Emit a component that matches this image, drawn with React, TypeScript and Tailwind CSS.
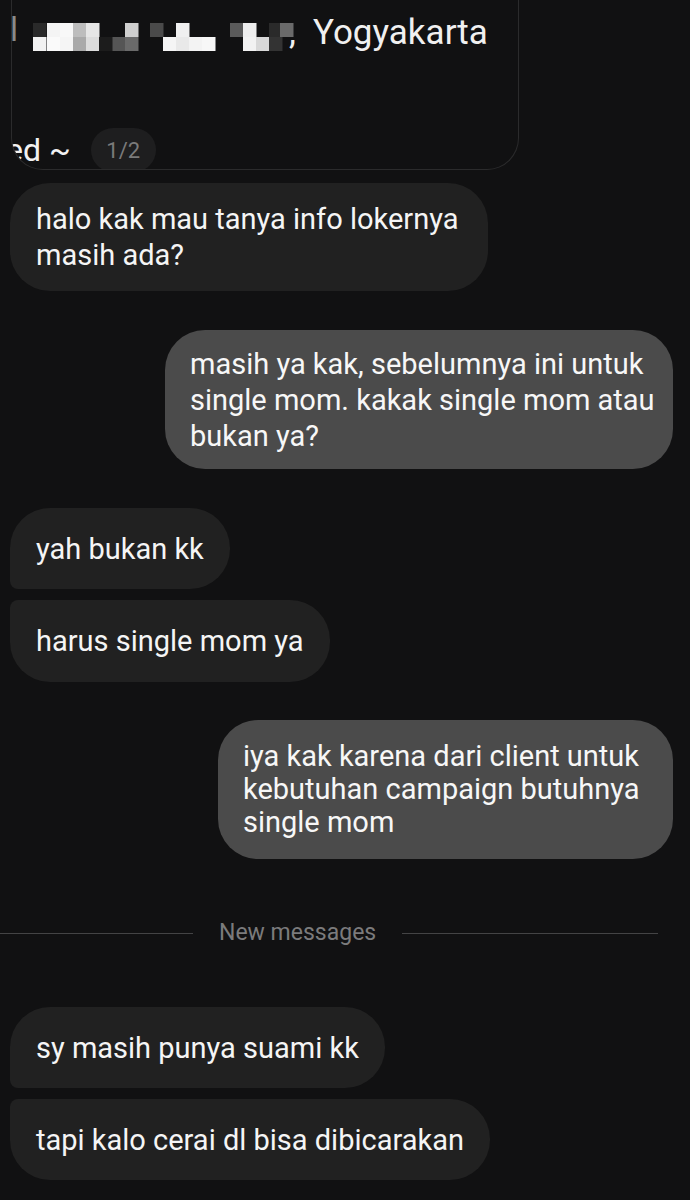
import React from 'react'

const font = { fontFamily: 'Roboto, "Liberation Sans", sans-serif' }

function Mosaic() {
  // pixelated censor blocks over the address
  const blocks: [number, number, string][] = [
    [47, 23, '#f4f4f4'], [60, 23, '#f8f8f8'], [73, 23, '#bdbdbd'], [86, 23, '#e6e6e6'], [33, 23, '#2a2a2a'],
    [33, 37, '#f2f2f2'], [47, 37, '#fafafa'], [60, 37, '#f5f5f5'], [73, 37, '#a9a9a9'], [86, 37, '#dcdcdc'],
    [125, 23, '#cfcfcf'], [112, 37, '#555'], [125, 37, '#6a6a6a'], [99, 37, '#1c1c1c'],
    [150, 23, '#4a4a4a'], [176, 23, '#f0f0f0'], [163, 37, '#f5f5f5'], [176, 37, '#e9e9e9'], [189, 37, '#f3f3f3'], [202, 37, '#f7f7f7'],
    [230, 23, '#5a5a5a'], [243, 23, '#eeeeee'], [243, 37, '#f2f2f2'], [256, 37, '#d8d8d8'], [269, 23, '#2a2a2a'], [280, 23, '#6a6a6a'], [269, 37, '#333'],
  ]
  return (
    <svg width="300" height="60" viewBox="0 0 300 60" className="absolute left-0 top-0">
      {blocks.map(([x, y, c], i) => (
        <rect key={i} x={x} y={y} width="13.5" height="14" fill={c} />
      ))}
    </svg>
  )
}

function Received({ children, h, w, tl = 40, bl = 40 }: { children: React.ReactNode; h: string; w?: string; tl?: number; bl?: number }) {
  const corners =
    tl === 40 && bl === 40
      ? 'rounded-[40px]'
      : tl === 40
        ? 'rounded-tl-[40px] rounded-tr-[40px] rounded-br-[40px] rounded-bl-[8px]'
        : 'rounded-tl-[8px] rounded-tr-[40px] rounded-br-[40px] rounded-bl-[40px]'
  return (
    <div className={`self-start flex items-center bg-[#212121] text-[#f5f5f5] px-[26px] text-[29px] leading-[36px] whitespace-nowrap ${h} ${w ?? ''} ${corners}`}>
      <p>{children}</p>
    </div>
  )
}

function Sent({ children, h, w }: { children: React.ReactNode; h: string; w: string }) {
  return (
    <div className={`self-end mr-[7px] flex items-center bg-[#4b4b4b] text-[#f7f7f7] px-[25px] text-[29px] leading-[36px] whitespace-nowrap rounded-[40px] ${h} ${w}`}>
      <p>{children}</p>
    </div>
  )
}

export default function App() {
  return (
    <div className="w-[690px] h-[1200px] bg-[#111112] overflow-hidden flex flex-col" style={font}>
      {/* shared post card, scrolled so only its lower part shows */}
      <div className="relative ml-[11px] w-[508px] h-[170px] shrink-0 overflow-hidden border border-t-0 border-[#2b2b2c] rounded-b-[32px]">
        <div className="absolute left-[-12px] top-0 w-[520px] h-[60px]">
          <Mosaic />
          <span className="absolute left-[10px] top-[8px] text-[33px] leading-[44px] text-[#8a8a8a]">l</span>
          <span className="absolute left-[289px] top-[11px] text-[35px] leading-[44px] text-[#f0f0f0]">,</span>
          <span className="absolute left-[313px] top-[11px] text-[35px] leading-[44px] text-[#f0f0f0]">Yogyakarta</span>
        </div>
        <div className="absolute left-[-6px] top-[128px] flex items-center">
          <span className="text-[32px] leading-[40px] text-[#f2f2f2]">ed ~</span>
          <span className="ml-[20px] flex items-center justify-center w-[65px] h-[44px] rounded-full bg-[#1e1e1f] text-[#7a7a7a] text-[22px]">1/2</span>
        </div>
      </div>

      <div className="flex flex-col px-[10px] pt-[13px]">
        <Received h="h-[108px]" w="w-[478px]">
          halo kak mau tanya info lokernya
          <br />
          masih ada?
        </Received>

        <div className="h-[39px]" />
        <Sent h="h-[139px]" w="w-[508px]">
          masih ya kak, sebelumnya ini untuk
          <br />
          single mom. kakak single mom atau
          <br />
          bukan ya?
        </Sent>

        <div className="h-[39px]" />
        <Received h="h-[81px]" bl={8}>yah bukan kk</Received>
        <div className="h-[11px]" />
        <Received h="h-[82px]" tl={8}>harus single mom ya</Received>

        <div className="h-[38px]" />
        <Sent h="h-[139px]" w="w-[455px]">
          <span className="block leading-[33px]">
            iya kak karena dari client untuk
            <br />
            kebutuhan campaign butuhnya
            <br />
            single mom
          </span>
        </Sent>
      </div>

      {/* divider */}
      <div className="flex items-center mt-[61px] h-[26px] pr-[32px]">
        <div className="w-[193px] h-px bg-[#444445]" />
        <span className="px-[26px] text-[23px] text-[#7b7b7c]">New messages</span>
        <div className="flex-1 h-px bg-[#444445]" />
      </div>

      <div className="flex flex-col px-[10px] pt-[61px]">
        <Received h="h-[81px]" bl={8}>sy masih punya suami kk</Received>
        <div className="h-[11px]" />
        <Received h="h-[81px]" tl={8}>tapi kalo cerai dl bisa dibicarakan</Received>
      </div>
    </div>
  )
}
